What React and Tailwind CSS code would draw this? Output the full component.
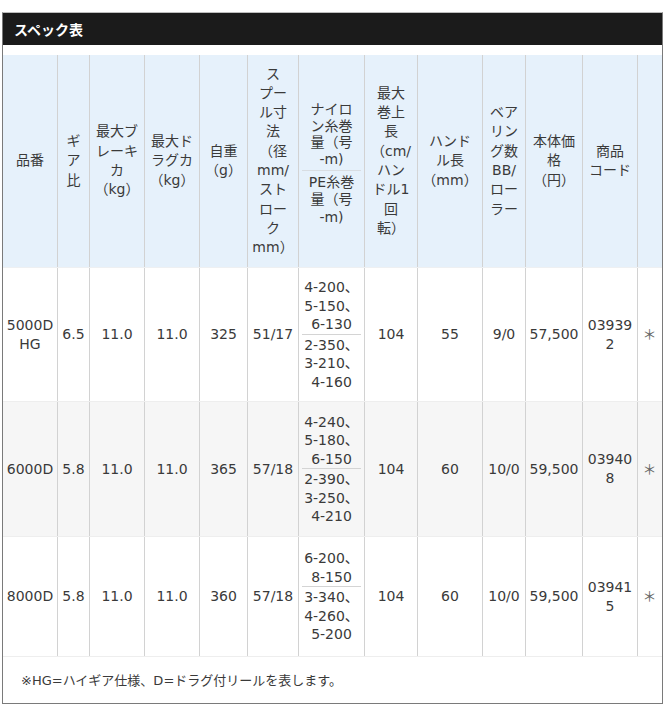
import React from "react";

const COLS = "grid grid-cols-[55px_32px_55px_55px_48px_51px_66px_53px_65px_43px_57px_55px_23px]";

const headers = [
  ["品番"],
  ["ギ", "ア", "比"],
  ["最大ブ", "レーキ", "カ", "（kg）"],
  ["最大ド", "ラグカ", "（kg）"],
  ["自重", "（g）"],
  ["ス", "プー", "ル寸", "法", "（径", "mm/", "スト", "ロー", "ク", "mm）"],
  null,
  ["最大", "巻上", "長", "（cm/", "ハン", "ドル1", "回", "転）"],
  ["ハンド", "ル長", "（mm）"],
  ["ベア", "リン", "グ数", "BB/", "ロー", "ラー"],
  ["本体価", "格", "（円）"],
  ["商品", "コード"],
  [""],
];

const rows = [
  {
    h: "h-[134px]",
    bg: "bg-white",
    model: ["5000D", "HG"],
    gear: "6.5",
    brake: "11.0",
    drag: "11.0",
    weight: "325",
    spool: "51/17",
    nylon: ["4-200、", "5-150、", "6-130"],
    pe: ["2-350、", "3-210、", "4-160"],
    max: "104",
    handle: "55",
    bb: "9/0",
    price: "57,500",
    code: ["03939", "2"],
  },
  {
    h: "h-[135px]",
    bg: "bg-[#f6f6f6]",
    model: ["6000D"],
    gear: "5.8",
    brake: "11.0",
    drag: "11.0",
    weight: "365",
    spool: "57/18",
    nylon: ["4-240、", "5-180、", "6-150"],
    pe: ["2-390、", "3-250、", "4-210"],
    max: "104",
    handle: "60",
    bb: "10/0",
    price: "59,500",
    code: ["03940", "8"],
  },
  {
    h: "h-[120px]",
    bg: "bg-white",
    model: ["8000D"],
    gear: "5.8",
    brake: "11.0",
    drag: "11.0",
    weight: "360",
    spool: "57/18",
    nylon: ["6-200、", "8-150"],
    pe: ["3-340、", "4-260、", "5-200"],
    max: "104",
    handle: "60",
    bb: "10/0",
    price: "59,500",
    code: ["03941", "5"],
  },
];

function Lines({ lines }) {
  return (
    <div>
      {lines.map((l, i) => (
        <div key={i} className="whitespace-nowrap">{l}</div>
      ))}
    </div>
  );
}

function Cell({ children, last }) {
  return (
    <div
      className={
        "flex items-center justify-center text-center px-[3px] " +
        (last ? "" : "border-r border-[#d2d2d2]")
      }
    >
      {children}
    </div>
  );
}

export default function App() {
  return (
    <div className="bg-white w-[665px] h-[720px] pt-[12px] px-[2px] font-['DejaVu_Sans','Noto_Sans_CJK_JP',sans-serif] text-[14px] leading-[19px] text-[#3a3a3a]">
      <div className="w-[661px] border border-t-[#bdbdbd] border-x-[#7a7a7a] border-b-[#7a7a7a]">
        <div className="h-[32px] bg-[#1b1b1b] flex items-center pl-[11px]">
          <span className="text-white font-bold text-[14px] font-['Noto_Sans_CJK_JP',sans-serif]">スペック表</span>
        </div>
        <div className="h-[10px] bg-white" />
        {/* header */}
        <div className={COLS + " h-[213px] bg-[#e6f1fb] border-b border-[#eef0f2] leading-[19.3px]"}>
          {headers.map((h, i) =>
            h === null ? (
              <Cell key={i}>
                <div className="w-full pt-[5px]">
                  <div className="leading-[16.7px]">
                    <Lines lines={["ナイロ", "ン糸巻", "量（号", "-m)"]} />
                  </div>
                  <div className="border-t border-[#d8dde2] mt-[2px] pt-[3px] leading-[17.5px]">
                    <Lines lines={["PE糸巻", "量（号", "-m)"]} />
                  </div>
                </div>
              </Cell>
            ) : (
              <Cell key={i} last={i === headers.length - 1}>
                <Lines lines={h} />
              </Cell>
            )
          )}
        </div>
        {rows.map((r, i) => (
          <div key={i} className={COLS + " " + r.h + " " + r.bg + " border-b border-[#eeeeee]"}>
            <Cell><Lines lines={r.model} /></Cell>
            <Cell>{r.gear}</Cell>
            <Cell>{r.brake}</Cell>
            <Cell>{r.drag}</Cell>
            <Cell>{r.weight}</Cell>
            <Cell>{r.spool}</Cell>
            <Cell>
              <div className="w-full leading-[18.5px]">
                <Lines lines={r.nylon} />
                <div className="border-t border-[#d4d4d4] pt-[1px]">
                  <Lines lines={r.pe} />
                </div>
              </div>
            </Cell>
            <Cell>{r.max}</Cell>
            <Cell>{r.handle}</Cell>
            <Cell>{r.bb}</Cell>
            <Cell>{r.price}</Cell>
            <Cell><Lines lines={r.code} /></Cell>
            <Cell last><span className="text-[#666]">＊</span></Cell>
          </div>
        ))}
        <div className="h-[46px] flex items-center pl-[18px] bg-white text-[13px]">
          ※HG=ハイギア仕様、D=ドラグ付リールを表します。
        </div>
      </div>
    </div>
  );
}
